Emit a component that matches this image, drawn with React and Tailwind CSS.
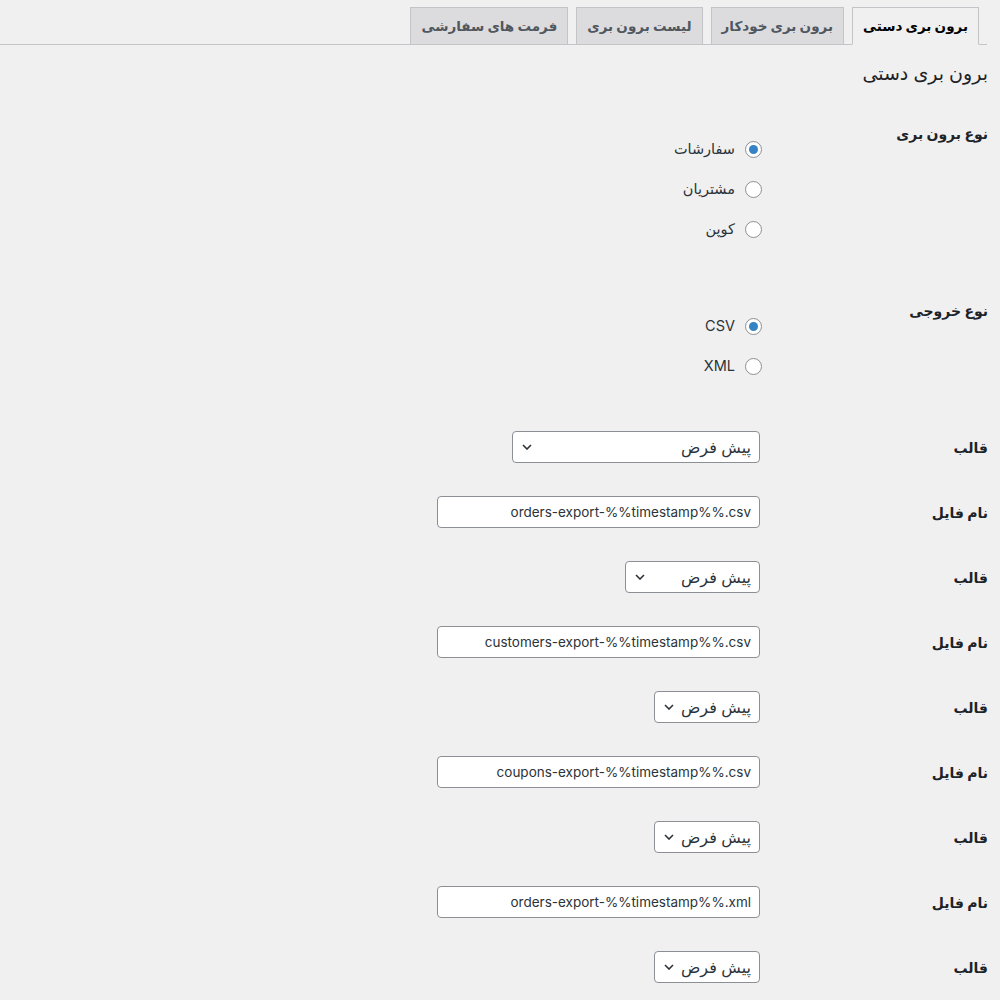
import { useState } from 'react';

const tabs = ['برون بری دستی', 'برون بری خودکار', 'لیست برون بری', 'فرمت های سفارشی'];

const fieldRows = [
    { type: 'select', label: 'قالب', width: 'w-[248px]' },
    { type: 'input', label: 'نام فایل', value: 'orders-export-%%timestamp%%.csv' },
    { type: 'select', label: 'قالب', width: 'w-[135px]' },
    { type: 'input', label: 'نام فایل', value: 'customers-export-%%timestamp%%.csv' },
    { type: 'select', label: 'قالب', width: 'w-[106px]' },
    { type: 'input', label: 'نام فایل', value: 'coupons-export-%%timestamp%%.csv' },
    { type: 'select', label: 'قالب', width: 'w-[106px]' },
    { type: 'input', label: 'نام فایل', value: 'orders-export-%%timestamp%%.xml' },
    { type: 'select', label: 'قالب', width: 'w-[106px]' },
];

function Radio({ checked, label, onChange }) {
    return (
        <label className="flex items-center gap-[10px] h-[40px] cursor-pointer">
            <span className="w-[17px] h-[17px] rounded-full border border-[#8c8f94] bg-white flex items-center justify-center shrink-0">
                {checked && <span className="w-[9px] h-[9px] rounded-full bg-[#3582c4]"></span>}
            </span>
            <input type="radio" className="hidden" checked={checked} onChange={onChange} />
            <span className="text-[14.5px] text-[#2c3338]">{label}</span>
        </label>
    );
}

function Select({ width }) {
    return (
        <div className={`${width} h-[32px] bg-white border border-[#8c8f94] rounded-[4px] flex items-center justify-between pr-[8px] pl-[9px]`}>
            <span className="text-[16px] text-[#2c3338] leading-[20px]">پیش فرض</span>
            <svg width="10" height="6" viewBox="0 0 10 6" fill="none">
                <path d="M1 1l4 4 4-4" stroke="#2c3338" strokeWidth="1.6" />
            </svg>
        </div>
    );
}

function App() {
    const [activeTab, setActiveTab] = useState(0);
    const [exportType, setExportType] = useState('orders');
    const [format, setFormat] = useState('csv');

    return (
        <div dir="rtl" className="min-h-screen bg-[#f0f0f1] text-[#1d2327] font-['Inter','DejaVu_Sans',sans-serif]">
            <div className="flex items-end border-b border-[#c3c4c7] pt-[7px] pr-[8px] gap-[8px] mr-[13px]">
                {tabs.map((t, i) => (
                    <button
                        key={t}
                        onClick={() => setActiveTab(i)}
                        className={`h-[38px] px-[10px] -mb-px border border-[#c3c4c7] text-[13.5px] font-bold leading-[24px] ${
                            activeTab === i
                                ? 'bg-[#f0f0f1] border-b-[#f0f0f1] text-black'
                                : 'bg-[#dcdcde] text-[#50575e]'
                        }`}
                    >
                        {t}
                    </button>
                ))}
            </div>

            <div className="pr-[12px]">
                <h2 className="text-[19px] font-medium leading-[24px] mt-[17px] mb-[23px]">برون بری دستی</h2>

                {/* export type */}
                <div className="flex h-[177px]">
                    <div className="w-[227px] shrink-0 pt-[15px] text-[14px] font-bold leading-[20px]">نوع برون بری</div>
                    <div className="pt-[20px] -mr-[1px]">
                        <Radio label="سفارشات" checked={exportType === 'orders'} onChange={() => setExportType('orders')} />
                        <Radio label="مشتریان" checked={exportType === 'customers'} onChange={() => setExportType('customers')} />
                        <Radio label="کوپن" checked={exportType === 'coupons'} onChange={() => setExportType('coupons')} />
                    </div>
                </div>

                {/* output type */}
                <div className="flex h-[129px]">
                    <div className="w-[227px] shrink-0 pt-[15px] text-[14px] font-bold leading-[20px]">نوع خروجی</div>
                    <div className="pt-[20px] -mr-[1px]">
                        <Radio label="CSV" checked={format === 'csv'} onChange={() => setFormat('csv')} />
                        <Radio label="XML" checked={format === 'xml'} onChange={() => setFormat('xml')} />
                    </div>
                </div>

                {fieldRows.map((row, i) => (
                    <div key={i} className="flex h-[65px]">
                        <div className="w-[228px] shrink-0 pt-[23px] text-[14px] font-bold leading-[20px]">{row.label}</div>
                        <div className="pt-[16px]">
                            {row.type === 'select' ? (
                                <Select width={row.width} />
                            ) : (
                                <input
                                    type="text"
                                    defaultValue={row.value}
                                    className="w-[323px] h-[32px] bg-white border border-[#8c8f94] rounded-[4px] px-[8px] text-[13.5px] text-[#2c3338] outline-none"
                                />
                            )}
                        </div>
                    </div>
                ))}
            </div>
        </div>
    );
}

export default App;
